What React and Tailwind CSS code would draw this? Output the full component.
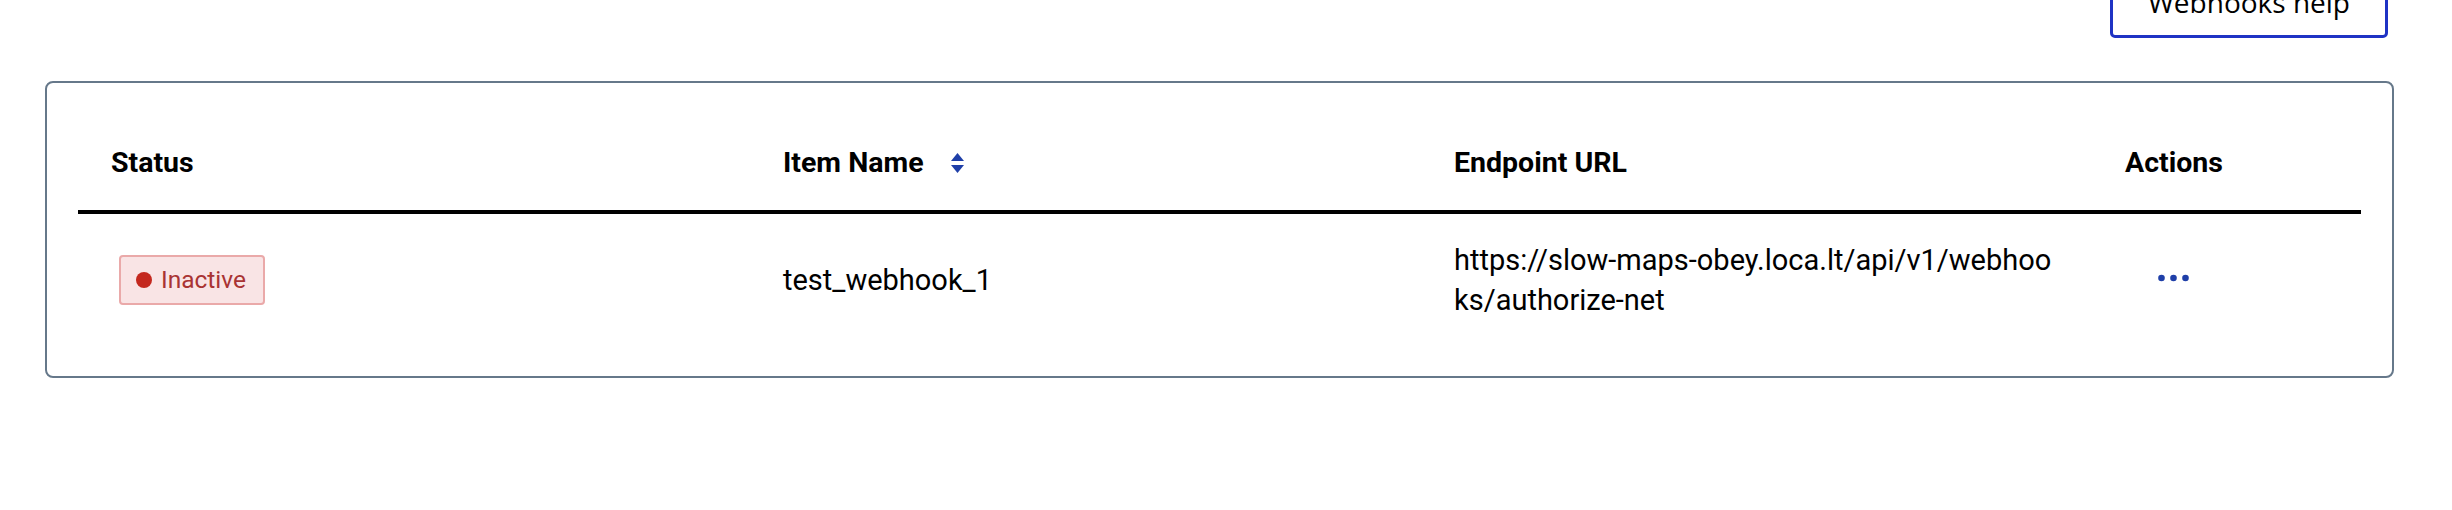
import React from "react";

const SortIcon = () => (
  <svg width="13" height="20" viewBox="0 0 13 20" className="block">
    <path d="M6.5 0 L13 8 L0 8 Z" fill="#1f3fa8" />
    <path d="M0 12 L13 12 L6.5 20 Z" fill="#1f3fa8" />
  </svg>
);

const DotsIcon = () => (
  <svg width="31" height="8" viewBox="0 0 31 8" className="block">
    <circle cx="3.5" cy="4" r="3.3" fill="#1f3fa8" />
    <circle cx="15.5" cy="4" r="3.3" fill="#1f3fa8" />
    <circle cx="27.5" cy="4" r="3.3" fill="#1f3fa8" />
  </svg>
);

const webhooks = [
  {
    id: 1,
    active: false,
    name: "test_webhook_1",
    url: "https://slow-maps-obey.loca.lt/api/v1/webhooks/authorize-net",
  },
];

const App = () => {
  return (
    <div className="min-h-[510px] bg-white pl-[45px] pr-[58px] font-['Roboto',sans-serif] text-black overflow-hidden">
      <div className="flex justify-end">
        <button className="-mt-[40px] mr-[6px] w-[278px] border-[3px] border-[#1f33c4] rounded-[5px] bg-white pt-[20px] pb-[14px] text-[28px] leading-[38px] text-black font-['Open_Sans',sans-serif]">
          Webhooks help
        </button>
      </div>

      <div className="mt-[43px] border-2 border-[#66788a] rounded-[8px] px-[31px] pt-[28px] pb-[30px]">
        <table className="w-full table-fixed border-collapse text-left">
          <thead>
            <tr className="border-b-[4px] border-black">
              <th className="w-[672px] px-[33px] pt-[34px] pb-[29px] text-[28.5px] leading-[36px] font-bold">
                Status
              </th>
              <th className="w-[671px] px-[33px] pt-[34px] pb-[29px] text-[28.5px] leading-[36px] font-bold">
                <span className="inline-flex items-center gap-[27px]">
                  Item Name
                  <SortIcon />
                </span>
              </th>
              <th className="w-[671px] px-[33px] pt-[34px] pb-[29px] text-[28.5px] leading-[36px] font-bold">
                Endpoint URL
              </th>
              <th className="px-[33px] pt-[34px] pb-[29px] text-[28.5px] leading-[36px] font-bold">
                Actions
              </th>
            </tr>
          </thead>
          <tbody>
            {webhooks.map((hook) => (
              <tr key={hook.id}>
                <td className="pl-[41px] pr-[33px] pt-[26px] pb-[26px] align-middle">
                  <span className="inline-flex items-center gap-[9px] h-[50px] pl-[15px] pr-[17px] border-2 border-[#eaa9a9] bg-[#f9e4e5] rounded-[4px] text-[24.5px] text-[#a93333]">
                    <span className="w-[16px] h-[16px] rounded-full bg-[#c4281e]" />
                    {hook.active ? "Active" : "Inactive"}
                  </span>
                </td>
                <td className="px-[33px] pt-[26px] pb-[26px] align-middle text-[29px] leading-[40px]">
                  {hook.name}
                </td>
                <td className="px-[33px] pt-[26px] pb-[26px] align-middle text-[29px] leading-[40px]">
                  <div className="break-all">{hook.url}</div>
                </td>
                <td className="px-[33px] pt-[26px] pb-[26px] align-middle">
                  <button className="ml-[33px] -mt-[4px] flex items-center">
                    <DotsIcon />
                  </button>
                </td>
              </tr>
            ))}
          </tbody>
        </table>
      </div>
    </div>
  );
};

export default App;
